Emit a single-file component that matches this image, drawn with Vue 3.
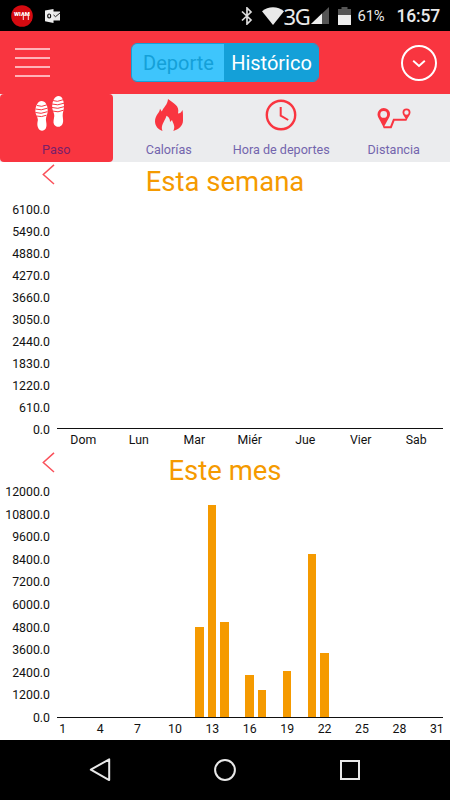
<template>
  <div class="screen">
    <div class="status">
      <div class="status-left">
        <svg width="22" height="22" viewBox="0 0 22 22">
          <circle cx="11" cy="11" r="10.8" fill="#d50a10" />
          <text x="11" y="11.2" text-anchor="middle" class="badge">WIAM</text>
          <path d="M12.3 10v5M17.3 10v5" stroke="#fff" stroke-width=".9" />
        </svg>
        <svg width="16" height="14" viewBox="0 0 16 14">
          <path d="M7.500 2.500H15v9H7.500z" fill="#e8e8e8" />
          <path d="M7.500 5l3 2.700L15 4" fill="none" stroke="#222" stroke-width="1" />
          <path d="M0 1.500L8.500 0v14L0 12.300z" fill="#eee" />
          <ellipse cx="4.200" cy="7" rx="1.500" ry="2" fill="none" stroke="#111" stroke-width="1.200" />
        </svg>
      </div>
      <div class="status-right">
        <svg class="bluetooth" width="12" height="18" viewBox="0 0 12 18">
          <path d="M1 4.500l9 8.500-4 4V1l4 4-9 8.500" fill="none" stroke="#ddd" stroke-width="1.700" />
        </svg>
        <svg class="wifi" width="22" height="18" viewBox="0 0 22 18">
          <path d="M0 4.200C6-1 16-1 22 4.200L11 18z" fill="#e9e9e9" />
        </svg>
        <span class="network">3G</span>
        <svg class="signal" width="18" height="17" viewBox="0 0 18 17">
          <path d="M18 0v17H0z" fill="#555" />
          <path d="M11 6.600V17H0z" fill="#eee" />
        </svg>
        <svg class="battery" width="13" height="18" viewBox="0 0 13 18">
          <path d="M3.500 0h6v2H13v7H0V2h3.500z" fill="#555" />
          <path d="M0 8h13v10H0z" fill="#eee" />
        </svg>
        <span class="percent">61%</span>
        <span class="clock">16:57</span>
      </div>
    </div>

    <header class="header">
      <button class="menu" aria-label="Menu">
        <i v-for="n in 4" :key="n"></i>
      </button>
      <div class="switch">
        <button
          v-for="mode in modes"
          :key="mode"
          :class="{ active: currentMode === mode }"
          @click="currentMode = mode"
        >
          {{ mode }}
        </button>
      </div>
      <button class="more" aria-label="More">
        <svg width="38" height="38" viewBox="0 0 38 38">
          <circle cx="19" cy="19" r="17" fill="none" stroke="#fff" stroke-width="2" />
          <path d="M13.200 16.700l5.800 5.300 5.800-5.300" fill="none" stroke="#fff" stroke-width="1.900" />
        </svg>
      </button>
    </header>

    <nav class="tabs">
      <button
        v-for="tab in tabs"
        :key="tab"
        :class="{ active: currentTab === tab }"
        @click="currentTab = tab"
      >
        <svg v-if="tab === 'Paso'" class="paso" width="30" height="38" viewBox="0 1 30 38">
          <g fill="#fff">
            <path d="M6.500 6C3 6 .4 11 .4 16c0 4 2.300 5 2.500 9-.6 3-1 5 .3 8 1.500 3.500 6 3.400 7.700.3 1.300-3 .2-6 0-8.500 0-3.500 1.900-5.500 1.800-9.500C12.600 10 10.500 6 6.500 6z" />
            <path d="M23.500 1C27.400 1 29 6 29 11c0 4-1.500 6.500-1.300 10 .2 3 1 5.500-.2 8-1.600 3.600-6.300 3.600-8.300.8-1.500-2.600-.2-5.800.1-8.800.1-3.500-2-5-2.100-9C17 6.500 19.500 1 23.500 1z" />
          </g>
          <path d="M2 10.500q4.500 2 10-.7M.5 14q5.500 2 12-.8M.4 17.500q5.500 2 12-.8M1.500 21q5 1.500 10-.8M17.500 5.500q4.500 2 10.500-.7M17 9q5.500 2 12-.8M17 12.500q5.500 2 12-.8M17.500 16q5.500 2 11-.8" fill="none" stroke="#f93540" stroke-width="1" />
        </svg>
        <svg v-else-if="tab === 'Calorías'" width="30" height="38" viewBox="0 0 30 38">
          <path d="M14 3c-.4 6-4.500 8-6.200 12.500L6 12.700C5.700 17 1 19 1 25.500 1.200 30 4 33.500 8.500 35c-2.300-6 2.200-9.300 4-15.300 3.500 2 3.500 4.500 3.500 6.300l2-2c1 3.500 3.800 6 1.300 11C24.500 33.500 29 30 29 24.500c0-4 .2-7-.5-10.500-1.200 2.500-2.500 3.500-4.500 3.500C26 9.500 19.500 7.500 14 3z" fill="#f93540" />
        </svg>
        <svg v-else-if="tab === 'Hora de deportes'" width="32" height="38" viewBox="0 0 32 38">
          <circle cx="16" cy="19" r="14.200" fill="none" stroke="#f93540" stroke-width="2.400" />
          <path d="M15.700 11v8.700l7.500 4.300" fill="none" stroke="#f93540" stroke-width="2" />
        </svg>
        <svg v-else width="34" height="38" viewBox="0 0 34 38">
          <path d="M6.700 12a6.300 6.300 0 0 0-6.200 6.300C.5 22 4 25 6.700 32 9.400 25 13 22 13 18.300A6.300 6.300 0 0 0 6.700 12zm0 3a3.400 3.400 0 1 1 0 6.800 3.400 3.400 0 0 1 0-6.800z" fill="#f93540" fill-rule="evenodd" />
          <path d="M29.500 12.500a4 4 0 0 0-4 4c0 2.300 2.500 4.500 4 8 1.500-3.500 4-5.700 4-8a4 4 0 0 0-4-4zm0 1.800a2.200 2.200 0 1 1 0 4.400 2.200 2.200 0 0 1 0-4.400z" fill="#f93540" fill-rule="evenodd" />
          <path d="M6.700 31.200h7.200l2.900-7.400h12.700" fill="none" stroke="#f93540" stroke-width="2" />
        </svg>
        <span>{{ tab }}</span>
      </button>
    </nav>

    <section v-for="chart in charts" :key="chart.title" :class="['chart', chart.name]">
      <div class="chart-head">
        <svg class="prev" width="13" height="21" viewBox="0 0 13 21">
          <path d="M12 .9L1.300 10.500 12 20" fill="none" stroke="#fa505a" stroke-width="1.500" />
        </svg>
        <h2>{{ chart.title }}</h2>
      </div>
      <div class="chart-body">
        <div class="y-axis">
          <span v-for="n in 11" :key="n">{{ yLabel(chart.max, n - 1) }}</span>
        </div>
        <div class="plot">
          <div class="bars">
            <div v-for="(value, i) in chart.values" :key="i" class="slot">
              <div
                v-if="value"
                class="bar"
                :style="{ height: (value / chart.max) * 100 + '%' }"
              ></div>
            </div>
          </div>
          <div class="x-axis">
            <span v-for="(label, i) in chart.labels" :key="i">{{ label }}</span>
          </div>
        </div>
      </div>
    </section>

    <footer class="nav-bar">
      <svg width="24" height="26" viewBox="0 0 24 26">
        <path d="M21.200 2.300v20.800L2.800 12.700z" fill="none" stroke="#e8e8e8" stroke-width="2" stroke-linejoin="round" />
      </svg>
      <svg width="24" height="26" viewBox="0 0 24 26">
        <circle cx="12" cy="13" r="9.900" fill="none" stroke="#e8e8e8" stroke-width="2" />
      </svg>
      <svg width="24" height="26" viewBox="0 0 24 26">
        <rect x="3" y="4" width="18" height="18" fill="none" stroke="#e8e8e8" stroke-width="2" />
      </svg>
    </footer>
  </div>
</template>

<script setup>
import { ref } from 'vue';

const modes = ['Deporte', 'Histórico'];
const tabs = ['Paso', 'Calorías', 'Hora de deportes', 'Distancia'];
const currentMode = ref('Histórico');
const currentTab = ref('Paso');

// steps per day of the month
const monthSteps = {
  12: 4800,
  13: 11290,
  14: 5050,
  16: 2240,
  17: 1430,
  19: 2430,
  21: 8720,
  22: 3430,
};
const days = Array.from({ length: 31 }, (_, i) => i + 1);

const charts = [
  {
    name: 'week',
    title: 'Esta semana',
    max: 6100,
    values: [0, 0, 0, 0, 0, 0, 0],
    labels: ['Dom', 'Lun', 'Mar', 'Miér', 'Jue', 'Vier', 'Sab'],
  },
  {
    name: 'month',
    title: 'Este mes',
    max: 12000,
    values: days.map((day) => monthSteps[day] || 0),
    // only every third day gets a label
    labels: days.map((day) => (day % 3 === 1 ? day : '')),
  },
];

function yLabel(max, step) {
  return (max - (max / 10) * step).toFixed(1);
}
</script>

<style>
body {
  margin: 0;
  background: #fff;
}
</style>

<style scoped>
.screen {
  width: 450px;
  height: 800px;
  display: flex;
  flex-direction: column;
  overflow: hidden;
  background: #fff;
  font-family: Roboto, 'Liberation Sans', sans-serif;
}

button {
  padding: 0;
  border: none;
  background: none;
  font-family: inherit;
  cursor: pointer;
}

svg {
  display: block;
  flex: none;
}

.status {
  height: 31px;
  flex: none;
  box-sizing: border-box;
  padding: 0 10px 0 11px;
  display: flex;
  justify-content: space-between;
  align-items: center;
  background: #000;
  color: #e9e9e9;
}

.status-left,
.status-right {
  display: flex;
  align-items: center;
}

.status-left {
  gap: 12px;
}

.badge {
  fill: #fff;
  font-size: 5.800px;
  font-weight: 900;
}

.wifi {
  margin-left: 9px;
}

.network {
  width: 26px;
  font-family: 'Noto Sans', sans-serif;
  font-size: 22px;
  line-height: 30px;
  letter-spacing: -1.500px;
}

.signal {
  margin-left: 1px;
}

.battery {
  margin-left: 9px;
}

.percent {
  width: 28px;
  margin-left: 7px;
  font-size: 14.800px;
  letter-spacing: -0.200px;
}

.clock {
  margin-left: 11px;
  font-size: 17.500px;
  font-weight: 500;
  letter-spacing: -0.200px;
}

.header {
  height: 63px;
  flex: none;
  box-sizing: border-box;
  padding: 0 12px 0 15px;
  display: flex;
  justify-content: space-between;
  align-items: center;
  background: #f93540;
}

.menu {
  width: 35px;
  display: flex;
  flex-direction: column;
  gap: 7.300px;
}

.menu i {
  height: 2px;
  background: #ffb3b8;
}

.switch {
  width: 188px;
  height: 39px;
  margin: 0 auto 1px 81px;
  box-sizing: border-box;
  display: flex;
  overflow: hidden;
  border: 1px solid #14a0d8;
  border-radius: 6px;
}

.switch button {
  width: 92px;
  padding: 2px 0 0 1px;
  font-size: 20px;
  color: #14a0d8;
  background: #3ec5fc;
}

.switch button.active {
  flex: 1;
  color: #fff;
  background: #14a0d8;
}

.tabs {
  height: 68px;
  flex: none;
  display: grid;
  grid-template-columns: repeat(4, 1fr);
  background: #ebecee;
}

.tabs button {
  display: flex;
  flex-direction: column;
  align-items: center;
  gap: 8px;
  padding-top: 2px;
  font-size: 12.600px;
  line-height: 15px;
  color: #7365ad;
}

.tabs button.active {
  border-radius: 4px;
  background: #f93540;
  color: #7b1f69;
}

.paso {
  margin-left: -13px;
}

.chart {
  height: 289px;
  flex: none;
  display: flex;
  flex-direction: column;
}

.chart-head {
  height: 41px;
  display: flex;
  align-items: flex-start;
}

.prev {
  margin: 2px -55px 0 42px;
}

.month .prev {
  margin-top: 1px;
}

h2 {
  flex: 1;
  margin: 3px 0 0;
  text-align: center;
  font-size: 27.500px;
  font-weight: 400;
  line-height: 34px;
  color: #f59a00;
}

.chart-body {
  flex: 1;
  display: flex;
}

.y-axis {
  width: 50px;
  height: 234px;
  display: flex;
  flex-direction: column;
  justify-content: space-between;
  text-align: right;
  font-size: 12.300px;
  line-height: 14px;
  color: #111;
}

.month .y-axis {
  height: 240px;
  margin-top: -7px;
}

.plot {
  flex: 1;
  margin: 7px 7px 0 6.500px;
}

.month .plot {
  margin-top: 0;
}

.bars {
  height: 218px;
  display: flex;
  border-bottom: 1.500px solid #111;
}

.month .bars {
  height: 225px;
}

.slot {
  flex: 1;
  display: flex;
  align-items: flex-end;
  justify-content: center;
}

.bar {
  width: 8.500px;
  margin-right: 0.500px;
  background: #f59a00;
}

.x-axis {
  display: flex;
  margin: 3px 0 0 -1px;
  font-size: 12.300px;
  line-height: 16px;
  color: #111;
}

.week .x-axis {
  margin-right: -1px;
}

.month .x-axis {
  margin-left: 0;
}

.x-axis span {
  flex: 1 1 0;
  width: 0;
  display: flex;
  justify-content: center;
  white-space: nowrap;
}

.nav-bar {
  flex: 1;
  padding: 0 88px;
  display: flex;
  justify-content: space-between;
  align-items: center;
  background: #000;
}
</style>
